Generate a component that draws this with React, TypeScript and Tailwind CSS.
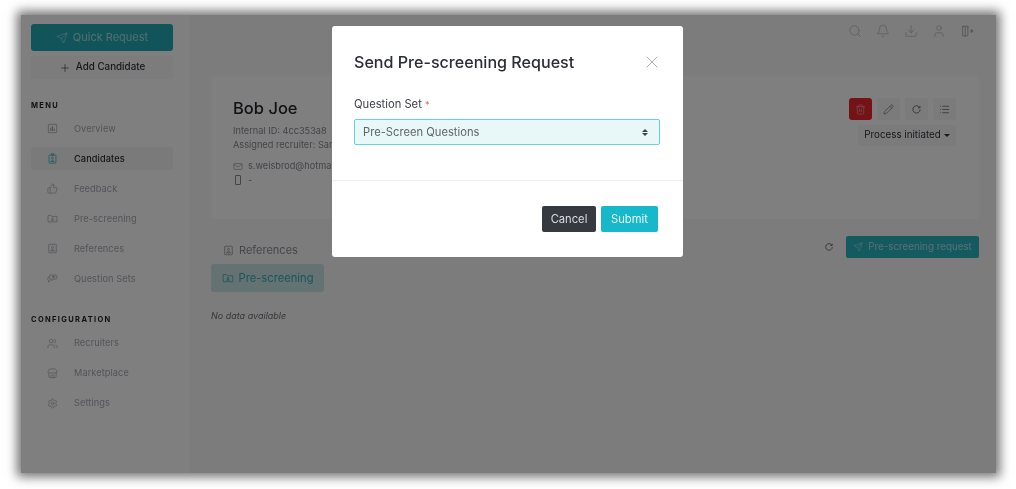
import {
  Bell,
  Download,
  List,
  Pencil,
  Plus,
  Search,
  Send,
  Settings,
  Store,
  ThumbsUp,
  Trash2,
  User,
  Users,
  X,
} from 'lucide-react';
import type { ReactNode } from 'react';

function RefreshRing({ className }: { className?: string }) {
  return (
    <svg viewBox="0 0 16 16" fill="none" stroke="currentColor" strokeWidth="1.2" className={className}>
      <path d="M12.6 5.2A5.3 5.3 0 1 0 13.3 8" />
      <path d="M13 2.8v2.8h-2.8" />
    </svg>
  );
}

function ExitDoor({ className }: { className?: string }) {
  return (
    <svg viewBox="0 0 16 16" fill="none" stroke="currentColor" strokeWidth="1" className={className}>
      <path d="M9 2.5H3v11h6z" />
      <path d="M3 2.5l3 1.2v10.8" />
      <path d="M9 5v-2.5M11.5 8h1.5" />
      <path d="M13 6.2L15 8l-2 1.8z" fill="currentColor" />
    </svg>
  );
}

function ChartBox({ className }: { className?: string }) {
  return (
    <svg viewBox="0 0 16 16" fill="none" stroke="currentColor" strokeWidth="1.1" className={className}>
      <rect x="2" y="2" width="12" height="12" rx="1" />
      <path d="M5.5 11.5V7M8 11.5V4.5M10.5 11.5V8.5" strokeWidth="1.6" />
    </svg>
  );
}

function BadgeId({ className }: { className?: string }) {
  return (
    <svg viewBox="0 0 16 16" fill="none" stroke="currentColor" strokeWidth="1.1" className={className}>
      <rect x="3" y="2.8" width="10" height="12" rx="1" />
      <rect x="6.2" y="1" width="3.6" height="2.8" rx="0.6" />
      <circle cx="8" cy="7.6" r="1.4" />
      <path d="M5.4 12.4c.3-1.8 4.9-1.8 5.2 0z" />
    </svg>
  );
}

function FolderPerson({ className }: { className?: string }) {
  return (
    <svg viewBox="0 0 16 16" fill="none" stroke="currentColor" strokeWidth="1" className={className}>
      <path d="M1.5 3.5h4.5l1.2 1.5h7.3v8h-13z" />
      <circle cx="8" cy="8" r="1.1" />
      <path d="M6 11c.3-1.4 3.7-1.4 4 0z" />
    </svg>
  );
}

function PersonBox({ className }: { className?: string }) {
  return (
    <svg viewBox="0 0 16 16" fill="none" stroke="currentColor" strokeWidth="1.1" className={className}>
      <rect x="2.5" y="1.8" width="11" height="12.4" rx="0.8" />
      <circle cx="8" cy="6.4" r="1.5" />
      <path d="M5 11.4c.4-2.1 5.6-2.1 6 0z" />
    </svg>
  );
}

function Bubbles({ className }: { className?: string }) {
  return (
    <svg viewBox="0 0 16 16" fill="none" stroke="currentColor" strokeWidth="1.1" className={className}>
      <path d="M6.5 3h5.5a2.5 2.5 0 0 1 2.5 2.5v1A2.5 2.5 0 0 1 12 9H9l-3 2.2V9a3 3 0 0 1 .5-6z" />
      <path d="M3 5.5a3 3 0 0 0-.8 5.2V13l2.6-1.6" />
      <path d="M7 5.2h5M7 6.9h4" />
    </svg>
  );
}

function NavItem({ icon, label, active }: { icon: ReactNode; label: string; active?: boolean }) {
  return (
    <div
      className={`flex h-[23px] items-center rounded-sm pl-[16px] text-[9.2px] tracking-[0.01em] ${
        active ? 'bg-[#f4f4f4] font-medium text-[#2a2d33]' : 'text-[#a7a9b4]'
      }`}
    >
      <span className={`flex w-[27px] ${active ? 'text-[#3fb2bd]' : 'text-[#a7a9b4]'}`}>{icon}</span>
      {label}
    </div>
  );
}

function SideHeading({ children }: { children: ReactNode }) {
  return <div className="text-[7.5px] font-bold tracking-[0.18em] text-[#1f2126]">{children}</div>;
}

function Sidebar() {
  return (
    <aside className="flex w-[170px] shrink-0 flex-col border-r border-[#f2f2f2] bg-[#fefefe] pt-[9px] pr-[17px] pl-[10px]">
      <button className="flex h-[27px] items-center justify-center gap-[5px] rounded-[3px] bg-[#22a9b5] text-[11px] text-white/60">
        <Send className="h-[12px] w-[12px]" strokeWidth={1.3} />
        Quick Request
      </button>
      <button className="mt-[5px] flex h-[23px] items-center justify-center gap-[5px] rounded-[3px] bg-[#f8f8f8] text-[9.8px] font-medium text-[#30333a]">
        <Plus className="h-[12px] w-[12px]" strokeWidth={1.2} />
        Add Candidate
      </button>
      <div className="mt-[21px]">
        <SideHeading>MENU</SideHeading>
      </div>
      <div className="mt-[6px] flex flex-col gap-[7px]">
        <NavItem icon={<ChartBox className="h-[11px] w-[11px]" />} label="Overview" />
        <NavItem icon={<BadgeId className="h-[11px] w-[11px]" />} label="Candidates" active />
        <NavItem icon={<ThumbsUp className="h-[11px] w-[11px]" strokeWidth={1.5} />} label="Feedback" />
        <NavItem icon={<FolderPerson className="h-[11px] w-[11px]" />} label="Pre-screening" />
        <NavItem icon={<PersonBox className="h-[11px] w-[11px]" />} label="References" />
        <NavItem icon={<Bubbles className="h-[11px] w-[11px]" />} label="Question Sets" />
      </div>
      <div className="mt-[24px]">
        <SideHeading>CONFIGURATION</SideHeading>
      </div>
      <div className="mt-[6px] flex flex-col gap-[7px]">
        <NavItem icon={<Users className="h-[11px] w-[11px]" strokeWidth={1.5} />} label="Recruiters" />
        <NavItem icon={<Store className="h-[11px] w-[11px]" strokeWidth={1.5} />} label="Marketplace" />
        <NavItem icon={<Settings className="h-[11px] w-[11px]" strokeWidth={1.5} />} label="Settings" />
      </div>
    </aside>
  );
}

function IconButton({ children, red }: { children: ReactNode; red?: boolean }) {
  return (
    <button
      className={`flex h-[22px] w-[23px] items-center justify-center rounded-[3px] ${
        red ? 'bg-[#e8262c] text-[#f49a9c]' : 'bg-[#f6f6f6] text-[#5a5c62]'
      }`}
    >
      {children}
    </button>
  );
}

function CandidateCard() {
  return (
    <section className="relative flex h-[143px] justify-between rounded-[3px] bg-white pr-[23px] pl-[22px]">
      <div className="pt-[21px]">
        <h2 className="text-[16.5px] leading-[22px] font-medium text-[#23252b]">Bob Joe</h2>
        <p className="mt-[5px] text-[9.2px] leading-[14px] text-[#868993]">Internal ID: 4cc353a8</p>
        <p className="text-[9.2px] leading-[14px] text-[#868993]">Assigned recruiter: Sam</p>
        <p className="mt-[7px] flex items-center gap-[5px] text-[9.2px] leading-[14px] text-[#868993]">
          <svg viewBox="0 0 16 12" fill="none" stroke="currentColor" className="h-[7px] w-[10px]">
            <rect x="1" y="1" width="14" height="10" rx="1" />
            <path d="M1 2l7 5 7-5" />
          </svg>
          s.weisbrod@hotmail.com
        </p>
        <p className="flex items-center gap-[7px] text-[9.2px] leading-[14px] text-[#868993]">
          <span className="ml-[2px] h-[10px] w-[6px] rounded-[1px] border border-current" />-
        </p>
      </div>
      <div className="flex flex-col items-end pt-[22px]">
        <div className="flex gap-[5px]">
          <IconButton red>
            <Trash2 className="h-[11px] w-[11px]" strokeWidth={1.6} />
          </IconButton>
          <IconButton>
            <Pencil className="h-[11px] w-[11px]" strokeWidth={1.3} />
          </IconButton>
          <IconButton>
            <RefreshRing className="h-[11px] w-[11px]" />
          </IconButton>
          <IconButton>
            <List className="h-[11px] w-[11px]" strokeWidth={1.6} />
          </IconButton>
        </div>
        <button className="mt-[5px] flex h-[21px] w-[98px] items-center justify-center gap-[3px] rounded-[3px] bg-[#f6f6f6] text-[9.8px] text-[#30333a]">
          Process initiated
          <span className="h-0 w-0 border-x-[3px] border-t-[3px] border-x-transparent border-t-[#30333a]" />
        </button>
      </div>
    </section>
  );
}

function Main() {
  return (
    <main className="flex min-w-0 flex-1 flex-col bg-[#f8f8f8] pr-[17px] pl-[20px]">
      <header className="flex h-[61px] justify-end gap-[14px] pt-[9px] pr-[5px] text-[#a9abb2]">
        <Search className="h-[14px] w-[14px]" strokeWidth={1.1} />
        <Bell className="h-[14px] w-[14px]" strokeWidth={1.1} />
        <Download className="h-[14px] w-[14px]" strokeWidth={1.1} />
        <User className="h-[14px] w-[14px]" strokeWidth={1.1} />
        <ExitDoor className="h-[14px] w-[14px]" />
      </header>
      <CandidateCard />
      <div className="mt-[17px] flex h-[22px] items-center justify-between">
        <div className="flex items-center pt-[7px] pl-[12px] text-[11px] text-[#8c8e98]">
          <PersonBox className="mr-[5px] h-[11px] w-[11px]" />
          References
        </div>
        <div className="flex items-center gap-[12px]">
          <RefreshRing className="h-[10px] w-[10px] text-[#50525a]" />
          <button className="flex h-[22px] w-[133px] items-center justify-center gap-[5px] rounded-[2px] bg-[#2bb5c0] text-[9.8px] text-white/60">
            <Send className="h-[10px] w-[10px]" strokeWidth={1.3} />
            Pre-screening request
          </button>
        </div>
      </div>
      <div className="mt-[6px] flex h-[28px] w-[113px] items-center justify-center gap-[5px] rounded-[3px] bg-[#cbe4e6] text-[11.2px] text-[#38aab4]">
        <FolderPerson className="h-[12px] w-[12px]" />
        Pre-screening
      </div>
      <p className="mt-[17px] text-[9px] text-[#6e7078] italic">No data available</p>
    </main>
  );
}

function RequestModal() {
  return (
    <div className="absolute top-[11px] left-[311px] flex h-[231px] w-[351px] flex-col rounded-[3px] bg-white">
      <div className="flex items-center justify-between pt-[24px] pr-[21px] pl-[22px]">
        <h3 className="text-[16.1px] leading-[24px] font-medium text-[#2a2d33]">Send Pre-screening Request</h3>
        <X className="h-[20px] w-[20px] text-[#9b9da3]" strokeWidth={1} />
      </div>
      <div className="px-[22px] pt-[23px]">
        <div className="text-[11.2px] leading-[14px] text-[#3d4047]">
          Question Set <span className="text-[9px] text-[#f15a5a]">*</span>
        </div>
        <div className="mt-[7px] flex h-[26px] w-[306px] items-center justify-between rounded-[2px] border-[1.5px] border-[#64d3de] bg-[#e8f8f9] pr-[11px] pl-[8px] text-[11.2px] text-[#60636b]">
          Pre-Screen Questions
          <span className="flex flex-col gap-[1px]">
            <span className="h-0 w-0 border-x-[3px] border-b-[3px] border-x-transparent border-b-[#3d4047]" />
            <span className="h-0 w-0 border-x-[3px] border-t-[3px] border-x-transparent border-t-[#3d4047]" />
          </span>
        </div>
      </div>
      <div className="mt-[35px] border-t border-[#efefef]" />
      <div className="flex justify-end gap-[5px] pt-[25px] pr-[25px]">
        <button className="h-[26px] w-[54px] rounded-[2px] bg-[#343a40] text-[11.2px] text-[#dcdddf]">Cancel</button>
        <button className="h-[26px] w-[57px] rounded-[2px] bg-[#17b8c9] text-[11.2px] text-white/90">Submit</button>
      </div>
    </div>
  );
}

export default function App() {
  return (
    <div className="h-[489px] w-[1016px] overflow-hidden bg-white pt-[15px] pr-[20px] pl-[21px] font-['Inter',sans-serif] blur-[0.45px]">
      <div className="relative flex h-[458px] shadow-[0_0_10px_4px_rgba(0,0,0,0.55)]">
        <Sidebar />
        <Main />
        <div className="absolute inset-0 bg-black/50" />
        <RequestModal />
      </div>
    </div>
  );
}
